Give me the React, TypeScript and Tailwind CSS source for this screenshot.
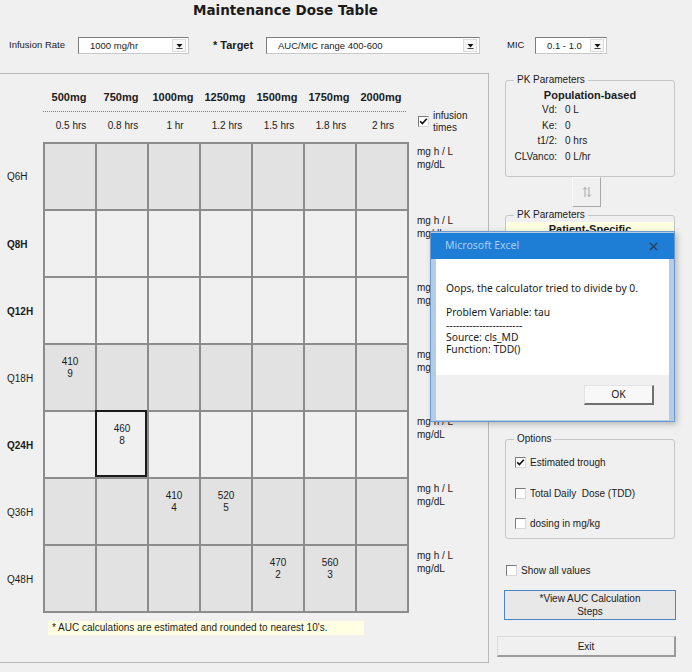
import React from "react";

const doses = ["500mg", "750mg", "1000mg", "1250mg", "1500mg", "1750mg", "2000mg"];
const times = ["0.5 hrs", "0.8 hrs", "1 hr", "1.2 hrs", "1.5 hrs", "1.8 hrs", "2 hrs"];

type Row = {
  label: string;
  bold?: boolean;
  shaded: boolean;
  values: Record<number, [string, string]>;
  selected?: number;
};

const rows: Row[] = [
  { label: "Q6H", shaded: true, values: {} },
  { label: "Q8H", bold: true, shaded: false, values: {} },
  { label: "Q12H", bold: true, shaded: false, values: {} },
  { label: "Q18H", shaded: true, values: { 0: ["410", "9"] } },
  { label: "Q24H", bold: true, shaded: false, values: { 1: ["460", "8"] }, selected: 1 },
  { label: "Q36H", shaded: true, values: { 2: ["410", "4"], 3: ["520", "5"] } },
  { label: "Q48H", shaded: true, values: { 4: ["470", "2"], 5: ["560", "3"] } },
];

function Check({ checked = false }: { checked?: boolean }) {
  return (
    <span className="inline-flex w-[11px] h-[11px] shrink-0 items-center justify-center bg-white border border-t-[#7a7a7a] border-l-[#7a7a7a] border-r-[#d8d8d8] border-b-[#d8d8d8]">
      {checked && (
        <svg width="9" height="9" viewBox="0 0 9 9">
          <path d="M1.2 4.2 L3.4 6.6 L7.8 1.8" fill="none" stroke="#111" strokeWidth="1.7" />
        </svg>
      )}
    </span>
  );
}

function Select({ value, width }: { value: string; width: string }) {
  return (
    <div className={`flex h-[17px] items-center bg-white border border-[#c8c8c8] border-t-[#7c7c7c] border-l-[#7c7c7c] ${width}`}>
      <span className="flex-1 pl-[11px] text-[9.5px] leading-[15px] truncate">{value}</span>
      <span className="flex h-[13px] w-[14px] mr-[2px] items-center justify-center border border-[#dcdcdc] bg-[#f7f7f7]">
        <svg width="7" height="6" viewBox="0 0 7 6">
          <path d="M0.5 1 L6.5 1 L3.5 4.5 Z" fill="#111" />
          <path d="M0.5 5.5 H6.5" stroke="#111" strokeWidth="0.8" />
        </svg>
      </span>
    </div>
  );
}

export default function App() {
  return (
    <div className="relative w-[692px] h-[672px] overflow-hidden bg-[#f0f0f0] text-[#1b1b1b] text-[10px] font-['Liberation_Sans',Arial,sans-serif]">
      {/* title */}
      <div className="h-[20px] pl-[193px] pt-[1px] text-[13.5px] font-bold leading-[18px] font-['DejaVu_Sans',sans-serif]">
        Maintenance Dose Table
      </div>

      {/* top controls */}
      <div className="mt-[17px] flex h-[17px] items-center">
        <span className="w-[78px] pl-[9px] text-[9.5px]">Infusion Rate</span>
        <Select value="1000 mg/hr" width="w-[111px]" />
        <span className="ml-[24px] w-[53px] text-[11px] font-bold">* Target</span>
        <Select value="AUC/MIC range 400-600" width="w-[214px]" />
        <span className="ml-[27px] w-[28px] text-[9.5px]">MIC</span>
        <Select value="0.1 - 1.0" width="w-[72px]" />
      </div>

      <div className="mt-[19px] flex h-[590px]">
        {/* dose table */}
        <div className="w-[489px] h-full border-t border-r border-b border-[#bababa]">
          <div className="mt-[16px] flex h-[14px] pl-[43px] text-[11px] font-bold leading-[14px]">
            {doses.map((d) => (
              <span key={d} className="w-[52px] text-center">
                {d}
              </span>
            ))}
          </div>
          <div className="mt-[7px] ml-[43px] w-[363px] border-t border-dotted border-[#808080]" />
          <div className="mt-[7px] flex h-[14px] leading-[14px]">
            <div className="flex pl-[45px]">
              {times.map((t) => (
                <span key={t} className="w-[52px] text-center">
                  {t}
                </span>
              ))}
            </div>
            <div className="ml-[9px] -mt-[9px] flex items-start gap-[4px]">
              <span className="mt-[6px]">
                <Check checked />
              </span>
              <span className="leading-[12px]">
                infusion
                <br />
                times
              </span>
            </div>
          </div>

          <div className="mt-[9px]">
            {rows.map((r, i) => (
              <div key={r.label} className="flex">
                <div className={`flex w-[43px] items-center pl-[7px] ${r.bold ? "font-bold" : ""}`}>
                  {r.label}
                </div>
                <div className={`flex border-l-2 border-[#8c8c8c] ${i === 0 ? "border-t-2" : ""}`}>
                  {doses.map((d, c) => {
                    const v = r.values[c];
                    return (
                      <div
                        key={d}
                        className={`relative w-[52px] h-[67px] border-r-2 border-b-2 border-[#8c8c8c] pt-[11px] text-center leading-[12px] ${
                          r.shaded ? "bg-[#e2e2e2]" : "bg-[#f0f0f0]"
                        }`}
                      >
                        {v && (
                          <>
                            <div>{v[0]}</div>
                            <div>{v[1]}</div>
                          </>
                        )}
                        {r.selected === c && (
                          <span className="absolute -left-[2px] -top-[2px] right-0 bottom-0 border-2 border-[#1a1a1a]" />
                        )}
                      </div>
                    );
                  })}
                </div>
                <div className="pl-[8px] pt-[3px] leading-[13px]">
                  mg h / L
                  <br />
                  mg/dL
                </div>
              </div>
            ))}
          </div>

          <div className="mt-[8px] ml-[48px] w-[316px] h-[14px] bg-[#ffffe1] pl-[4px] leading-[14px]">
            * AUC calculations are estimated and rounded to nearest 10's.
          </div>
        </div>

        {/* right side */}
        <div className="flex flex-1 flex-col pl-[16px]">
          <fieldset className="mt-[1px] w-[170px] h-[103px] rounded-[3px] border border-[#c6c6c6]">
            <legend className="ml-[8px] px-[3px] leading-[12px]">PK Parameters</legend>
            <div className="mt-[2px] text-center text-[11px] font-bold leading-[14px]">Population-based</div>
            <div className="grid grid-cols-[51px_1fr] leading-[15.5px]">
              <span className="text-right">Vd:</span>
              <span className="pl-[8px]">0 L</span>
              <span className="text-right">Ke:</span>
              <span className="pl-[8px]">0</span>
              <span className="text-right">t1/2:</span>
              <span className="pl-[8px]">0 hrs</span>
              <span className="text-right">CLVanco:</span>
              <span className="pl-[8px]">0 L/hr</span>
            </div>
          </fieldset>

          <div className="ml-[67px] flex w-[29px] h-[30px] items-center justify-center border border-t-[#fafafa] border-l-[#fafafa] border-r-[#a8a8a8] border-b-[#a8a8a8]">
            <svg width="12" height="12" viewBox="0 0 12 12" fill="none" stroke="#a5a5a5" strokeWidth="1">
              <path d="M4 11 V1.5 M2 3.5 L4 1.5 L6 3.5" />
              <path d="M8 1 V10.5 M6 8.5 L8 10.5 L10 8.5" />
            </svg>
          </div>

          <fieldset className="mt-[2px] w-[170px] h-[211px] rounded-[3px] border border-[#c6c6c6]">
            <legend className="ml-[8px] px-[3px] leading-[12px]">PK Parameters</legend>
            <div className="mt-[1px] h-[90px] bg-[#ffffe1] text-center text-[11px] font-bold leading-[14px]">
              Patient-Specific
            </div>
          </fieldset>

          <fieldset className="mt-[13px] w-[170px] h-[106px] rounded-[3px] border border-[#c6c6c6]">
            <legend className="ml-[8px] px-[3px] leading-[12px]">Options</legend>
            <div className="mt-[10px] flex h-[14px] items-center gap-[4px] pl-[9px]">
              <Check checked />
              <span>Estimated trough</span>
            </div>
            <div className="mt-[17px] flex h-[14px] items-center gap-[4px] pl-[9px]">
              <Check />
              <span>Total Daily&nbsp; Dose (TDD)</span>
            </div>
            <div className="mt-[16px] flex h-[14px] items-center gap-[4px] pl-[9px]">
              <Check />
              <span>dosing in mg/kg</span>
            </div>
          </fieldset>

          <div className="mt-[24px] ml-[1px] flex h-[14px] items-center gap-[4px]">
            <Check />
            <span>Show all values</span>
          </div>

          <button className="mt-[13px] -ml-[1px] flex w-[172px] h-[30px] flex-col items-center justify-center border border-[#4a88c4] bg-[#e8e8e8] leading-[13px]">
            <span>*View AUC Calculation</span>
            <span>Steps</span>
          </button>

          <button className="mt-[16px] -ml-[8px] w-[179px] h-[21px] border-t border-l border-r-2 border-b-2 border-t-[#dadada] border-l-[#dadada] border-r-[#9a9a9a] border-b-[#9a9a9a] bg-[#f0f0f0] leading-[17px]">
            Exit
          </button>
        </div>
      </div>

      {/* error dialog */}
      <div className="absolute left-[430px] top-[231px] flex w-[245px] h-[191px] flex-col border border-[#6a9ad0] bg-[#b4cce6] pt-[1px] pb-[1px] shadow-[2px_2px_6px_rgba(0,0,0,0.25)]">
        <div className="flex h-[26px] shrink-0 items-center justify-between bg-[#1e7dd4] pl-[14px] pr-[16px]">
          <span className="text-[10.5px] text-[#a9d0f4] font-['Noto_Sans',Arial,sans-serif]">Microsoft Excel</span>
          <svg width="9" height="9" viewBox="0 0 9 9">
            <path d="M1 1 L8 8 M8 1 L1 8" stroke="#223f5c" strokeWidth="1.4" />
          </svg>
        </div>
        <div className="mx-[5px] h-[116px] shrink-0 bg-white pl-[10px] pt-[23px] leading-[12.2px] font-['Noto_Sans',Arial,sans-serif] text-[10.3px]">
          <div>Oops, the calculator tried to divide by 0.</div>
          <div>&nbsp;</div>
          <div>Problem Variable: tau</div>
          <div>-----------------------</div>
          <div>Source: cls_MD</div>
          <div>Function: TDD()</div>
        </div>
        <div className="mx-[5px] flex h-[45px] shrink-0 justify-end bg-[#f0f0f0] pr-[15px] pt-[10px]">
          <div className="flex w-[70px] h-[20px] items-center justify-center border border-t-[#e2e2e2] border-l-[#e2e2e2] border-r-2 border-b-2 border-r-[#6f6f6f] border-b-[#6f6f6f] bg-[#f8f8f8] text-[10.5px] font-['Noto_Sans',Arial,sans-serif]">
            OK
          </div>
        </div>
      </div>
    </div>
  );
}
